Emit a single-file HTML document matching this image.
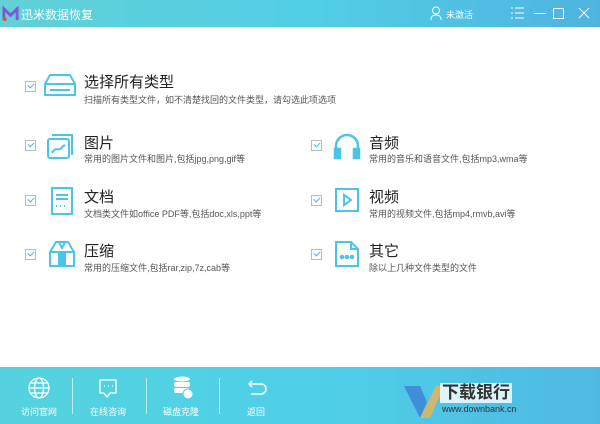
<!DOCTYPE html><html><head><meta charset="utf-8"><style>
*{margin:0;padding:0;box-sizing:border-box}
body{width:600px;height:424px;overflow:hidden;background:#fff;font-family:"Liberation Sans","Noto Sans CJK SC",sans-serif;position:relative}
.top{position:absolute;left:0;top:0;width:600px;height:27px;background:linear-gradient(90deg,#62d0d6,#52cfe6 50%,#4fb3e0)}
.top .t{position:absolute;left:21px;top:6px;color:#fff;font-size:12px}
.foot{position:absolute;left:0;top:367px;width:600px;height:57px;background:linear-gradient(90deg,#55d2de,#4fd0e8 50%,#4fb9e2)}
.cb{position:absolute;width:11px;height:11px;border:1px solid #bbb;background:#fff}
.cb:after{content:"";position:absolute;left:2px;top:1px;width:5px;height:3px;border-left:1.5px solid #3cb6e4;border-bottom:1.5px solid #3cb6e4;transform:rotate(-45deg)}
.h{position:absolute;font-size:15px;color:#222}
.s{position:absolute;font-size:9px;color:#555;white-space:nowrap}
.fl{position:absolute;top:405px;color:#fff;font-size:9px;width:40px;text-align:center}
.sep{position:absolute;top:378px;width:1px;height:36px;background:rgba(255,255,255,.6)}
svg{position:absolute}
</style></head><body>
<div class="top">
<svg style="left:2px;top:5px" width="17" height="17" viewBox="0 0 18 18"><path d="M2 16V4l7 7 7-7v12" stroke="#7a5bd0" stroke-width="3" fill="none"/><circle cx="3" cy="15" r="2" fill="#e5533d"/></svg>
<div class="t">迅米数据恢复</div>
<svg style="left:430px;top:6px" width="12" height="14" viewBox="0 0 12 14" fill="none" stroke="#fff"><circle cx="6" cy="4.5" r="3.5"/><path d="M1 14c0-4 2-5 5-5s5 1 5 5"/></svg>
<div style="position:absolute;left:446px;top:8px;color:#fff;font-size:9px">未激活</div>
<svg style="left:511px;top:7px" width="13" height="12" stroke="#fff" fill="none"><path d="M0 1h2M4 1h9M0 6h2M4 6h9M0 11h2M4 11h9"/></svg>
<svg style="left:520px;top:0" width="80" height="27" stroke="#fff" fill="none"><path d="M14 13.5h12"/><rect x="33.5" y="8.5" width="10" height="10"/><path d="M59 8l10 10M69 8l-10 10"/></svg>
</div>

<div class="cb" style="left:25px;top:81px"></div>
<svg style="left:44px;top:73px" width="32" height="24" fill="none" stroke="#4cc4e8" stroke-width="2"><path d="M6 2h20l5 9v11H1V11z M1 11h30 M6 17h20"/></svg>
<div class="h" style="left:84px;top:71px">选择所有类型</div>
<div class="s" style="left:84px;top:93px">扫描所有类型文件，如不清楚找回的文件类型，请勾选此项选项</div>

<div class="cb" style="left:25px;top:140px"></div>
<svg style="left:46px;top:132px" width="30" height="28" fill="none" stroke="#4cc4e8" stroke-width="2"><path d="M6 3h20v20"/><rect x="2" y="7" width="21" height="19" rx="2"/><path d="M6 21c4-8 7 0 10-6l3-2"/></svg>
<div class="h" style="left:84px;top:132px">图片</div>
<div class="s" style="left:84px;top:152px">常用的图片文件和图片,包括jpg,png,gif等</div>

<div class="cb" style="left:25px;top:195px"></div>
<svg style="left:50px;top:186px" width="24" height="30" fill="none" stroke="#4cc4e8" stroke-width="2"><rect x="2" y="2" width="20" height="26"/><path d="M6 9h12M6 13h12M6 20h1M10 20h1M14 20h1"/></svg>
<div class="h" style="left:84px;top:186px">文档</div>
<div class="s" style="left:84px;top:207px">文档类文件如office PDF等,包括doc,xls,ppt等</div>

<div class="cb" style="left:25px;top:249px"></div>
<svg style="left:48px;top:240px" width="28" height="28" fill="none" stroke="#4cc4e8" stroke-width="2"><path d="M8 2h12l6 10v14H2V12z M2 12h24"/><rect x="11" y="12" width="6" height="14" fill="#4cc4e8"/><path d="M11 2l3 6 3-6"/></svg>
<div class="h" style="left:84px;top:240px">压缩</div>
<div class="s" style="left:84px;top:261px">常用的压缩文件,包括rar,zip,7z,cab等</div>

<div class="cb" style="left:311px;top:140px"></div>
<svg style="left:333px;top:132px" width="28" height="28" fill="none" stroke="#4cc4e8" stroke-width="2.5"><path d="M3 20v-6a11 11 0 0 1 22 0v6"/><rect x="2" y="17" width="5" height="9" fill="#4cc4e8"/><rect x="21" y="17" width="5" height="9" fill="#4cc4e8"/></svg>
<div class="h" style="left:369px;top:132px">音频</div>
<div class="s" style="left:369px;top:152px">常用的音乐和语音文件,包括mp3,wma等</div>

<div class="cb" style="left:311px;top:195px"></div>
<svg style="left:334px;top:187px" width="26" height="26" fill="none" stroke="#4cc4e8" stroke-width="2"><rect x="2" y="2" width="22" height="22"/><path d="M10 8l7 5-7 5z"/></svg>
<div class="h" style="left:369px;top:186px">视频</div>
<div class="s" style="left:369px;top:207px">常用的视频文件,包括mp4,rmvb,avi等</div>

<div class="cb" style="left:311px;top:249px"></div>
<svg style="left:334px;top:240px" width="26" height="28" fill="none" stroke="#4cc4e8" stroke-width="2"><path d="M2 2h15l7 7v17H2z M17 2v7h7"/><circle cx="8" cy="17" r="1.3" fill="#4cc4e8"/><circle cx="13" cy="17" r="1.3" fill="#4cc4e8"/><circle cx="18" cy="17" r="1.3" fill="#4cc4e8"/></svg>
<div class="h" style="left:369px;top:240px">其它</div>
<div class="s" style="left:369px;top:261px">除以上几种文件类型的文件</div>

<div class="foot"></div>
<svg style="left:28px;top:377px" width="22" height="22" fill="none" stroke="#fff" stroke-width="1.3"><circle cx="11" cy="11" r="10"/><ellipse cx="11" cy="11" rx="4.5" ry="10"/><path d="M1 11h20M3 6h16M3 16h16"/></svg>
<div class="fl" style="left:19px">访问官网</div>
<div class="sep" style="left:72px"></div>
<svg style="left:98px;top:378px" width="22" height="22" fill="none" stroke="#fff" stroke-width="1.3"><path d="M2 2h16v13H12l-3 4-3-4H2z"/><path d="M6 8h1M10 8h1M14 8h1"/></svg>
<div class="fl" style="left:88px">在线咨询</div>
<div class="sep" style="left:146px"></div>
<svg style="left:173px;top:376px" width="22" height="24" fill="#fff"><ellipse cx="9" cy="3" rx="8" ry="2.5"/><rect x="1" y="6" width="16" height="5" rx="2"/><rect x="1" y="12" width="16" height="5" rx="2"/><circle cx="15" cy="18" r="5" stroke="#4fd0e8"/></svg>
<div class="fl" style="left:161px">磁盘克隆</div>
<div class="sep" style="left:219px"></div>
<svg style="left:247px;top:380px" width="22" height="18" fill="none" stroke="#fff" stroke-width="1.5"><path d="M2 4h12a5 5 0 0 1 0 10H4M5 1L2 4l3 3"/></svg>
<div class="fl" style="left:236px">返回</div>
<svg style="left:404px;top:386px" width="40" height="32"><path d="M0 0h16l7 16-7 16z" fill="#3a7fd4" opacity=".8"/><path d="M16 32L32 0h8L26 32z" fill="#e6b15a" opacity=".85"/></svg>
<div style="position:absolute;left:440px;top:383px;font-size:17px;color:#333;font-weight:bold;background:rgba(255,255,255,.8);padding:0 2px;line-height:20px">下载银行</div>
<div style="position:absolute;left:442px;top:404px;font-size:9px;color:#333">www.downbank.cn</div>
</body></html>
